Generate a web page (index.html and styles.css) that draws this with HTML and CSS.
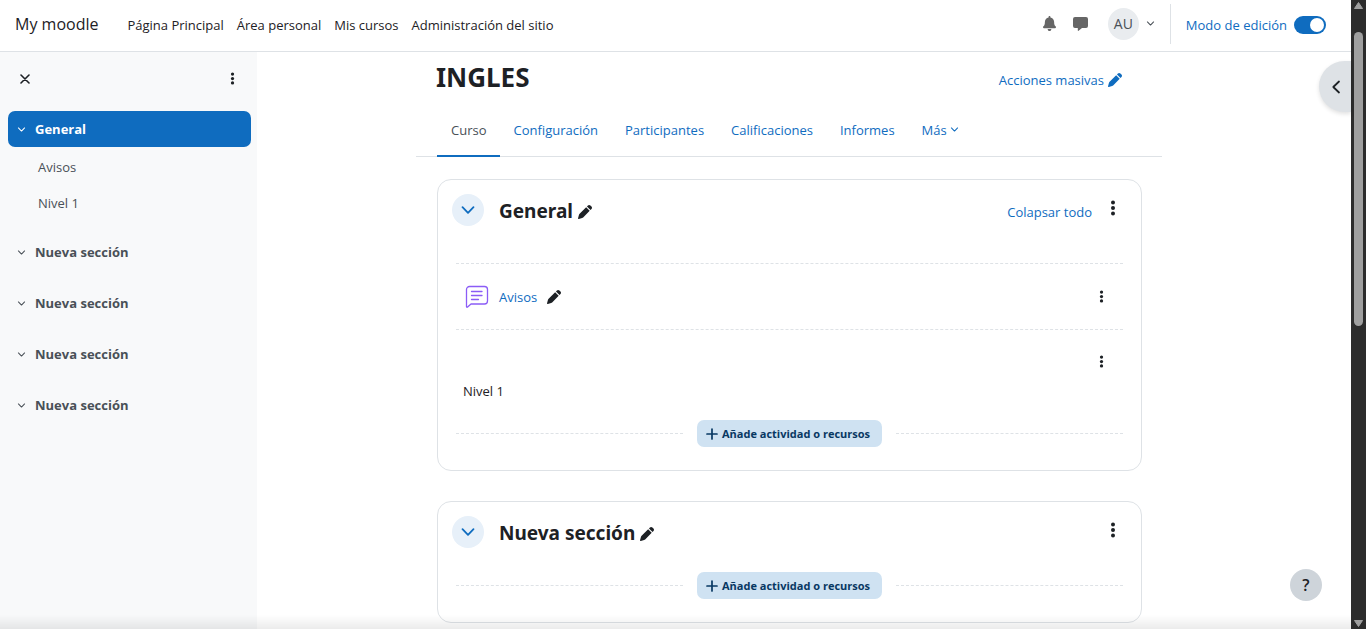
FILE: index.html
```html
<!DOCTYPE html>
<html lang="es">
<head>
<meta charset="utf-8">
<meta name="viewport" content="width=device-width, initial-scale=1">
<title>INGLES | My moodle</title>
<link rel="stylesheet" href="styles.css">
</head>
<body>
<svg class="sprite" aria-hidden="true">
  <symbol id="chevron" viewBox="0 0 16 16"><path d="M2.500 5.200 8 10.800l5.500-5.600" fill="none" stroke="currentColor" stroke-width="1.800" stroke-linecap="round" stroke-linejoin="round"/></symbol>
  <symbol id="dots" viewBox="0 0 6 16"><circle cx="3" cy="2.600" r="2" fill="currentColor"/><circle cx="3" cy="8" r="2" fill="currentColor"/><circle cx="3" cy="13.400" r="2" fill="currentColor"/></symbol>
  <symbol id="pencil" viewBox="0 0 512 512"><path fill="currentColor" d="M362.700 19.300 328 54 458 184l34.700-34.700c25-25 25-65.500 0-90.500l-39.400-39.500c-25-25-65.500-25-90.500 0zM298 84 58.600 323.500c-10.400 10.400-18 23.300-22.200 37.400L1 481.200C-1.500 489.700.800 498.800 7 505s15.300 8.500 23.700 6.100l120.300-35.400c14.100-4.200 27-11.800 37.400-22.200L428 214z"/></symbol>
</svg>
<div class="window">
  <div class="page">
    <header class="topbar">
      <a class="brand" href="#">My moodle</a>
      <nav class="sitenav" aria-label="Navegación del sitio">
        <a href="#">Página Principal</a>
        <a href="#">Área personal</a>
        <a href="#">Mis cursos</a>
        <a href="#">Administración del sitio</a>
      </nav>
      <div class="tools">
        <button class="icon-btn" aria-label="Notificaciones"><svg class="ico-bell" viewBox="0 0 448 512"><path fill="currentColor" d="M224 0c-17.700 0-32 14.300-32 32v19.200C119 66 64 130.600 64 208v18.800c0 47-17.300 92.400-48.500 127.600l-7.400 8.300c-8.400 9.400-10.400 22.900-5.300 34.400S19.400 416 32 416h384c12.600 0 24-7.400 29.200-18.900s3.100-25-5.300-34.400l-7.400-8.300C401.300 319.200 384 273.900 384 226.800V208c0-77.400-55-142-128-156.800V32c0-17.700-14.300-32-32-32zm45.300 493.300c12-12 18.700-28.300 18.700-45.300H160c0 17 6.700 33.300 18.700 45.300S207 512 224 512s33.300-6.700 45.300-18.700z"/></svg></button>
        <button class="icon-btn" aria-label="Mensajes"><svg class="ico-chat" viewBox="0 0 15 14"><path fill="currentColor" d="M2 0h11a2 2 0 0 1 2 2v7a2 2 0 0 1-2 2H9l-3.400 2.800c-.4.300-.8.100-.8-.3V11H2a2 2 0 0 1-2-2V2a2 2 0 0 1 2-2z"/></svg></button>
        <button class="user" aria-label="Menú de usuario"><span class="avatar">AU</span><svg class="chev-s"><use href="#chevron"/></svg></button>
      </div>
      <label class="editmode"><span>Modo de edición</span><input class="switch" type="checkbox" role="switch" checked></label>
    </header>
    <div class="body">
      <aside class="drawer">
        <div class="drawer-head">
          <button class="icon-btn" aria-label="Cerrar índice"><svg class="ico-x" viewBox="0 0 10 10"><path d="M1 1l8 8M9 1 1 9" stroke="currentColor" stroke-width="1.600" stroke-linecap="round"/></svg></button>
          <button class="icon-btn" aria-label="Opciones"><svg class="dots-s"><use href="#dots"/></svg></button>
        </div>
        <nav class="index" aria-label="Índice del curso">
          <a class="idx idx-active" href="#"><svg class="chev-s"><use href="#chevron"/></svg>General</a>
          <a class="idx-sub" href="#">Avisos</a>
          <a class="idx-sub" href="#">Nivel 1</a>
          <a class="idx" href="#"><svg class="chev-s"><use href="#chevron"/></svg>Nueva sección</a>
          <a class="idx" href="#"><svg class="chev-s"><use href="#chevron"/></svg>Nueva sección</a>
          <a class="idx" href="#"><svg class="chev-s"><use href="#chevron"/></svg>Nueva sección</a>
          <a class="idx" href="#"><svg class="chev-s"><use href="#chevron"/></svg>Nueva sección</a>
        </nav>
      </aside>
      <main class="main">
        <div class="course">
          <div class="title-row">
            <h1>INGLES</h1>
            <button class="link-btn">Acciones masivas <svg class="pencil"><use href="#pencil"/></svg></button>
          </div>
          <nav class="tabs" aria-label="Curso">
            <a class="tab tab-active" href="#" aria-current="page">Curso</a>
            <a class="tab" href="#">Configuración</a>
            <a class="tab" href="#">Participantes</a>
            <a class="tab" href="#">Calificaciones</a>
            <a class="tab" href="#">Informes</a>
            <a class="tab" href="#">Más <svg class="chev-s"><use href="#chevron"/></svg></a>
          </nav>
          <section class="card">
            <div class="card-head">
              <button class="round" aria-label="Contraer General"><svg class="chev-m"><use href="#chevron"/></svg></button>
              <h2>General</h2>
              <button class="icon-btn heading-edit" aria-label="Editar nombre"><svg class="pencil"><use href="#pencil"/></svg></button>
              <a class="collapse" href="#">Colapsar todo</a>
              <button class="icon-btn menu" aria-label="Editar sección"><svg class="dots-m"><use href="#dots"/></svg></button>
            </div>
            <ul class="activities">
              <li class="activity">
                <svg class="ico-forum" viewBox="0 0 24 24" fill="none" stroke="currentColor" stroke-linecap="round" stroke-linejoin="round"><path stroke-width="1.300" d="M4.500 1.500h15a3 3 0 0 1 3 3v11.500a3 3 0 0 1-3 3H6l-3.400 3c-.6.500-1.100.2-1.100-.5v-17a3 3 0 0 1 3-3z"/><path stroke-width="1.300" d="M6.500 6.500H17M6.500 10.500H17M6.500 14.500h7"/></svg>
                <a href="#">Avisos</a>
                <button class="icon-btn rename" aria-label="Editar título"><svg class="pencil"><use href="#pencil"/></svg></button>
                <button class="icon-btn menu" aria-label="Editar Avisos"><svg class="dots-s"><use href="#dots"/></svg></button>
              </li>
              <li class="activity activity-label">
                <button class="icon-btn menu" aria-label="Editar Nivel 1"><svg class="dots-s"><use href="#dots"/></svg></button>
                <p>Nivel 1</p>
              </li>
            </ul>
            <div class="add-row"><button class="add"><svg class="ico-plus" viewBox="0 0 12 12"><path d="M6 1v10M1 6h10" stroke="currentColor" stroke-width="1.700" stroke-linecap="round"/></svg>Añade actividad o recursos</button></div>
          </section>
          <section class="card">
            <div class="card-head">
              <button class="round" aria-label="Contraer Nueva sección"><svg class="chev-m"><use href="#chevron"/></svg></button>
              <h2>Nueva sección</h2>
              <button class="icon-btn heading-edit" aria-label="Editar nombre"><svg class="pencil"><use href="#pencil"/></svg></button>
              <button class="icon-btn menu" aria-label="Editar sección"><svg class="dots-m"><use href="#dots"/></svg></button>
            </div>
            <div class="add-row add-row-first"><button class="add"><svg class="ico-plus" viewBox="0 0 12 12"><path d="M6 1v10M1 6h10" stroke="currentColor" stroke-width="1.700" stroke-linecap="round"/></svg>Añade actividad o recursos</button></div>
          </section>
        </div>
      </main>
    </div>
    <button class="blocks-toggle" aria-label="Abrir cajón de bloques"><svg viewBox="0 0 10 14"><path d="M8 1.500 2.300 7 8 12.500" fill="none" stroke="currentColor" stroke-width="1.800" stroke-linecap="round" stroke-linejoin="round"/></svg></button>
    <button class="help" aria-label="Ayuda">?</button>
    <div class="page-fade"></div>
  </div>
  <div class="scrollbar" aria-hidden="true">
    <svg viewBox="0 0 9 7"><path d="M4.500.5 8.500 6.500h-8z" fill="#9f9f9f" stroke="#9f9f9f" stroke-linejoin="round"/></svg>
    <div class="track"><div class="thumb"></div></div>
    <svg viewBox="0 0 9 7"><path d="M4.500 6.500 8.500.5h-8z" fill="#9f9f9f" stroke="#9f9f9f" stroke-linejoin="round"/></svg>
  </div>
</div>
</body>
</html>
```
FILE: styles.css
```css
:root {
  --blue: #0f6cbf;
  --ink: #1d2125;
  --grey: #495057;
  --line: #dee2e6;
}
* { box-sizing: border-box; }
body {
  margin: 0;
  font: 13px/20px "Segoe UI", "Open Sans", "Noto Sans", sans-serif;
  color: var(--ink);
  background: #fff;
}
a { color: var(--blue); text-decoration: none; }
button { font: inherit; color: inherit; background: none; border: 0; padding: 0; cursor: pointer; }
h1, h2, p, ul { margin: 0; padding: 0; }
svg { display: block; flex: none; }
.sprite { position: absolute; width: 0; height: 0; }

.window { display: grid; grid-template-columns: minmax(0, 1fr) 15px; min-height: 100vh; }
.page { position: relative; display: flex; flex-direction: column; }

.icon-btn { display: flex; align-items: center; justify-content: center; }
.chev-s { width: 9px; height: 9px; }
.chev-m { width: 16px; height: 16px; }
.dots-s { width: 5px; height: 13px; }
.dots-m { width: 6px; height: 16px; }
.pencil { width: 14px; height: 14px; }

.topbar { display: flex; align-items: stretch; height: 52px; padding: 0 25px 0 15px; border-bottom: 1px solid var(--line); }
.brand { display: flex; align-items: center; padding-bottom: 3px; font-size: 16px; color: var(--ink); margin-right: 29px; }
.sitenav { display: flex; align-items: center; gap: 13px; padding-bottom: 2px; }
.sitenav a { color: var(--ink); }
.tools { display: flex; align-items: center; margin-left: auto; color: #666; padding-bottom: 4px; }
.ico-bell { width: 13px; height: 15px; }
.ico-chat { width: 15px; height: 14px; margin-left: 17px; }
.user { display: flex; align-items: center; gap: 7px; margin-left: 20px; color: var(--grey); }
.avatar { display: grid; place-items: center; width: 31px; height: 32px; border-radius: 50%; background: #e9ecef; font-size: 14px; }
.editmode { display: flex; align-items: center; gap: 7px; color: var(--blue); margin: 4px 0 7px 15px; padding: 2px 0 0 15px; border-left: 1px solid var(--line); }
.switch { appearance: none; display: flex; justify-content: flex-end; align-items: center; width: 32px; height: 18px; margin: 0; padding: 2px; border-radius: 9px; background: var(--blue); }
.switch::before { content: ""; width: 14px; height: 14px; border-radius: 50%; background: #fff; }
.switch:not(:checked) { justify-content: flex-start; background: #8f959e; }

.body { display: flex; flex: 1; }
.drawer { width: 257px; flex: none; background: #f8f9fa; }
.drawer-head { display: flex; align-items: center; justify-content: space-between; height: 59px; padding: 0 22px 6px 20px; }
.ico-x { width: 10px; height: 10px; }
.index { display: flex; flex-direction: column; padding: 0 6px 0 8px; }
.idx { display: flex; align-items: center; gap: 9px; height: 36px; padding: 0 9px; margin-top: 15px; border-radius: 7px; font-weight: 700; color: var(--grey); }
.idx-active { margin-top: 0; color: #fff; background: var(--blue); }
.idx-sub { height: 36px; padding: 10px 30px 6px; color: var(--grey); }

.main { flex: 1; padding: 0 30px 0 0; }
.course { width: 100%; max-width: 746px; margin: 0 auto; padding-bottom: 6px; }
.title-row { display: flex; align-items: center; justify-content: space-between; height: 52px; padding: 2px 40px 4px 20px; }
h1, h2 { font-family: "Segoe UI", "Noto Sans", sans-serif; font-weight: 700; }
h1 { font-size: 26px; line-height: 32px; }
.link-btn { display: flex; align-items: center; gap: 4px; color: var(--blue); padding-top: 6px; }
.tabs { display: flex; height: 53px; padding-left: 21px; border-bottom: 1px solid var(--line); margin-bottom: 22px; }
.tab { display: flex; align-items: center; gap: 3px; padding: 0 13px 0 14px; border-bottom: 2px solid transparent; margin-bottom: -1px; }
.tab-active { color: var(--grey); border-color: var(--blue); }

.card { margin: 0 20px 30px 21px; border: 1px solid var(--line); border-radius: 14px; padding: 14px 18px 23px; }
.card + .card { margin-bottom: 0; }
.card-head { display: flex; align-items: center; margin-left: -4px; height: 32px; }
.round { display: grid; place-items: center; width: 32px; height: 32px; border-radius: 50%; background: #e7f0f9; color: var(--blue); margin-right: 15px; }
h2 { font-size: 19px; line-height: 28px; padding-top: 2px; margin-right: 5px; }
.heading-edit { padding-top: 4px; }
.menu { margin-left: auto; }
.card-head .menu { margin-right: 7px; padding-bottom: 4px; }
.collapse { margin-left: auto; padding-top: 4px; }
.collapse + .menu { margin-left: 18px; }
.activities { list-style: none; margin-top: 37px; }
.activity { display: flex; align-items: center; height: 66px; border-top: 1px dashed var(--line); padding: 0 19px 0 9px; }
.ico-forum { width: 24px; height: 24px; color: #8b5cf6; margin-right: 10px; }
.rename { margin-left: 10px; }
.activity-label { height: auto; flex-direction: column; align-items: stretch; padding: 25px 19px 19px 7px; }
.activity-label .menu { margin-bottom: 13px; }
.add-row { display: flex; align-items: center; gap: 14px; }
.add-row::before, .add-row::after { content: ""; flex: 1; border-top: 1px dashed var(--line); }
.add-row-first { margin-top: 24px; }
.add { display: flex; align-items: center; gap: 4px; height: 27px; padding: 0 12px 0 9px; border-radius: 7px; background: #cfe2f2; color: #083863; font-size: 11px; font-weight: 700; }
.ico-plus { width: 12px; height: 12px; }

.blocks-toggle { position: absolute; top: 61px; right: 0; width: 32px; height: 51px; display: flex; align-items: center; padding-left: 12px; border-radius: 26px 0 0 26px; background: #dee2e6; box-shadow: 0 2px 4px rgba(0, 0, 0, .12); }
.blocks-toggle svg { width: 10px; height: 14px; }
.help { position: fixed; right: 44px; bottom: 28px; width: 32px; height: 32px; border-radius: 50%; background: #ced4da; font-size: 16px; font-weight: 600; }
.page-fade { position: fixed; left: 0; right: 15px; bottom: 0; height: 14px; background: linear-gradient(rgba(0, 0, 0, 0), rgba(0, 0, 0, .08)); pointer-events: none; }

.scrollbar { display: flex; flex-direction: column; align-items: center; background: #2c2c2c; padding: 2px 0; }
.scrollbar svg { width: 9px; height: 7px; }
.track { flex: 1; align-self: stretch; padding: 23px 3px 0; }
.thumb { height: 50%; width: 9px; border-radius: 5px; background: #9f9f9f; }
```
